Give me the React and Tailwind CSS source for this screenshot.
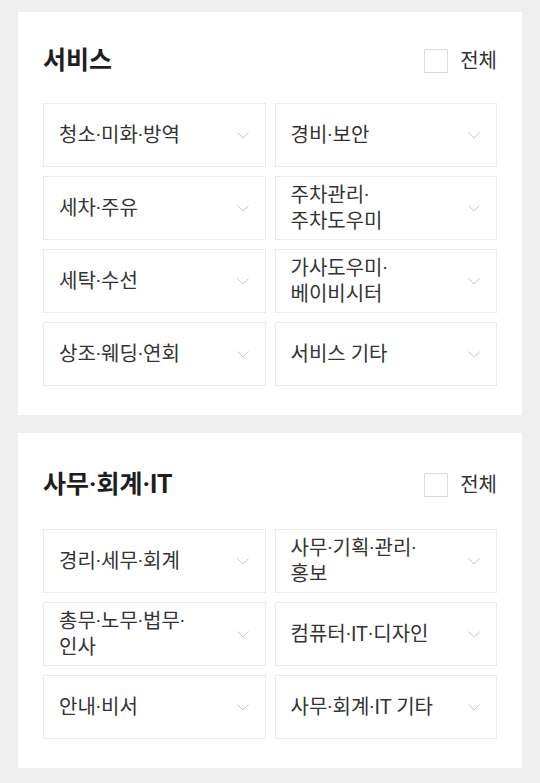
import { useState } from 'react';

const sections = [
  {
    title: '서비스',
    titleClass: 'leading-6',
    items: [
      ['청소·미화·방역'],
      ['경비·보안'],
      ['세차·주유'],
      ['주차관리·', '주차도우미'],
      ['세탁·수선'],
      ['가사도우미·', '베이비시터'],
      ['상조·웨딩·연회'],
      ['서비스 기타'],
    ],
  },
  {
    title: '사무·회계·IT',
    titleClass: 'leading-[29px]',
    items: [
      ['경리·세무·회계'],
      ['사무·기획·관리·', '홍보'],
      ['총무·노무·법무·', '인사'],
      ['컴퓨터·IT·디자인'],
      ['안내·비서'],
      ['사무·회계·IT 기타'],
    ],
  },
];

const ChevronDown = () => (
  <svg width="12" height="7" viewBox="0 0 12 7" fill="none" className="shrink-0">
    <path d="M0.5 0.5L6 6L11.5 0.5" stroke="#c8c8c8" strokeWidth="1" />
  </svg>
);

const Category = ({ lines }) => (
  <button
    type="button"
    className="h-16 border border-[#ebebeb] bg-white pl-[15px] pr-[16px] flex items-center justify-between text-left"
  >
    <span className="text-[20px] leading-[26px] text-[#333]">
      {lines.map((line, i) => (
        <span key={i} className="block">
          {line}
        </span>
      ))}
    </span>
    <ChevronDown />
  </button>
);

const Section = ({ title, titleClass, items }) => {
  const [all, setAll] = useState(false);

  return (
    <section className="bg-white px-[25px] pt-[37px] pb-[29px]">
      <div className="flex items-center justify-between mb-[30px]">
        <h2 className={`text-[25px] font-bold text-[#1e1e1e] ${titleClass}`}>{title}</h2>
        <label className="flex items-center gap-3 cursor-pointer">
          <span
            onClick={() => setAll(!all)}
            className={`w-6 h-6 border ${all ? 'border-[#333] bg-[#333]' : 'border-[#dcdcdc] bg-white'}`}
          />
          <span className="text-[20px] leading-6 text-[#333]">전체</span>
        </label>
      </div>
      <div className="grid grid-cols-2 gap-[9px]">
        {items.map((lines, i) => (
          <Category key={i} lines={lines} />
        ))}
      </div>
    </section>
  );
};

export default function App() {
  return (
    <div
      className="min-h-screen bg-[#efefef] px-[18px] pt-3 pb-4 flex flex-col gap-[18px]"
      style={{ fontFamily: 'Roboto, "Noto Sans CJK KR", sans-serif' }}
    >
      {sections.map((s) => (
        <Section key={s.title} {...s} />
      ))}
    </div>
  );
}
